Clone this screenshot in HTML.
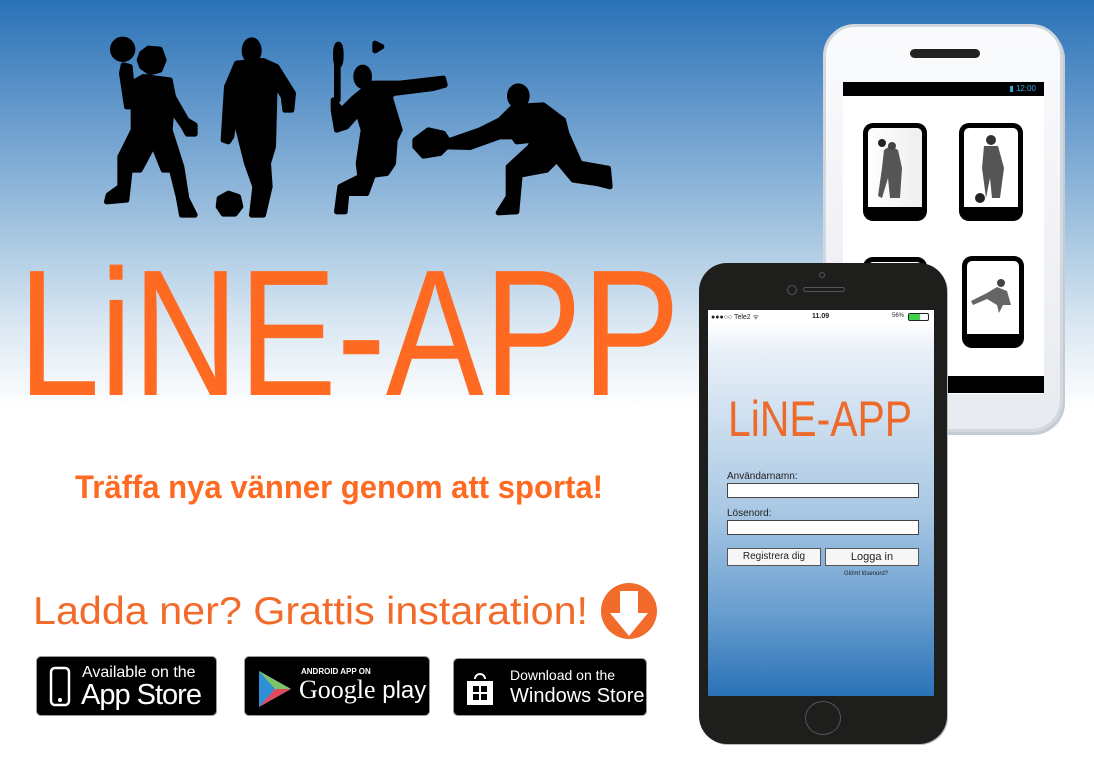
<!DOCTYPE html>
<html><head><meta charset="utf-8"><style>
*{margin:0;padding:0;box-sizing:border-box}
body{width:1094px;height:772px;overflow:hidden;position:relative;font-family:"Liberation Sans",sans-serif;background:linear-gradient(to bottom,#2a72b7 0px,#6fa0cf 130px,#a9c8e2 240px,#dde9f3 330px,#fff 410px,#fff 772px)}
.abs{position:absolute;white-space:nowrap}
.badge{position:absolute;background:#000;border-radius:5px;border:1px solid #999;color:#fff}
</style></head><body>

<svg class="abs" style="left:100px;top:30px" width="570" height="190" viewBox="0 0 1710 570">
<g fill="#000" stroke="#000" stroke-width="16" stroke-linejoin="round">
<circle cx="68" cy="58" r="30"/>
<polygon points="125,70 145,55 180,58 192,90 180,120 150,128 125,110 118,90"/>
<polygon points="70,105 90,110 95,160 130,140 210,150 220,200 260,270 285,285 285,312 262,312 250,290 215,240 210,300 245,410 260,505 285,555 245,555 235,500 215,420 190,420 160,345 120,420 90,420 80,510 20,515 25,495 60,470 60,380 100,300 100,230 80,230 65,130"/>
<ellipse cx="455" cy="62" rx="22" ry="32"/>
<polygon points="410,100 490,92 530,110 580,190 575,240 555,240 550,200 525,160 520,350 505,400 510,470 490,555 455,555 465,470 440,400 415,300 405,250 395,320 385,335 370,330 375,250 380,170"/>
<polygon points="358,505 385,490 415,500 422,530 405,552 370,552 355,530"/>
<ellipse cx="715" cy="75" rx="8" ry="32"/>
<rect x="710" y="100" width="4" height="110"/>
<polygon points="825,40 845,50 825,62"/>
<ellipse cx="788" cy="140" rx="20" ry="28"/>
<polygon points="700,210 725,240 760,205 815,160 900,160 1030,145 1035,165 1000,175 880,190 870,200 900,300 885,330 880,400 860,430 820,435 800,490 740,490 735,545 710,545 720,470 780,440 775,400 790,300 775,250 740,290 710,300 700,240"/>
<polygon points="945,330 985,300 1030,310 1050,340 1020,370 970,378 945,350"/>
<ellipse cx="1255" cy="198" rx="26" ry="30"/>
<polygon points="1040,335 1140,300 1200,270 1240,230 1330,225 1390,270 1400,310 1440,400 1525,415 1530,470 1490,460 1420,450 1370,390 1340,420 1260,435 1250,545 1195,548 1225,500 1225,410 1290,350 1300,330 1250,335 1240,320 1200,320 1110,352 1040,350"/>
</g></svg>

<svg class="abs" style="left:0;top:250px" width="700" height="160">
<text x="18" y="145" font-family="Liberation Sans" font-size="180" fill="#ff6a22" textLength="662" lengthAdjust="spacingAndGlyphs">LiNE-APP</text>
</svg>
<svg class="abs" style="left:0;top:460px" width="700" height="60">
<text x="75" y="38" font-family="Liberation Sans" font-weight="bold" font-size="32" fill="#ff6a22" textLength="528" lengthAdjust="spacingAndGlyphs">Träffa nya vänner genom att sporta!</text>
</svg>
<svg class="abs" style="left:0;top:580px" width="700" height="70">
<text x="33" y="44" font-family="Liberation Sans" font-size="39" fill="#f26b2a" textLength="555" lengthAdjust="spacingAndGlyphs">Ladda ner? Grattis instaration!</text>
<ellipse cx="629" cy="31" rx="28" ry="28" fill="#f26b2a"/>
<polygon points="620,11 638,11 638,33 648,33 629,56 610,33 620,33" fill="#fff"/>
</svg>

<div class="badge" style="left:36px;top:656px;width:181px;height:60px">
<svg class="abs" style="left:12px;top:9px" width="24" height="42"><rect x="2" y="2" width="18" height="37" rx="4" fill="none" stroke="#fff" stroke-width="2.5"/><circle cx="11" cy="34" r="2" fill="#fff"/></svg>
<div class="abs" style="left:45px;top:7px;font-size:16px">Available on the</div>
<div class="abs" style="left:44px;top:22px;font-size:29px;letter-spacing:-1px">App Store</div>
</div>
<div class="badge" style="left:244px;top:656px;width:186px;height:60px">
<svg class="abs" style="left:12px;top:12px" width="36" height="40"><polygon points="2,2 34,20 2,38" fill="#3bb0c9"/><polygon points="2,2 18,20 2,38" fill="#2e8fd6"/><polygon points="18,20 34,20 2,38" fill="#e04a5f"/><polygon points="2,2 34,20 18,20" fill="#7cc36a"/></svg>
<div class="abs" style="left:56px;top:10px;font-size:8px;font-weight:bold">ANDROID APP ON</div>
<div class="abs" style="left:54px;top:18px;font-size:26px;font-family:'Liberation Serif',serif">Google<span style="font-family:'Liberation Sans';font-size:24px"> play</span></div>
</div>
<div class="badge" style="left:453px;top:658px;width:194px;height:58px">
<svg class="abs" style="left:10px;top:10px" width="32" height="38"><path d="M11 10 a5 5 0 0 1 10 0" fill="none" stroke="#fff" stroke-width="2"/><rect x="3" y="12" width="26" height="24" fill="#fff"/><rect x="9" y="17" width="6" height="6" fill="#000"/><rect x="17" y="17" width="6" height="6" fill="#000"/><rect x="9" y="25" width="6" height="6" fill="#000"/><rect x="17" y="25" width="6" height="6" fill="#000"/></svg>
<div class="abs" style="left:56px;top:8px;font-size:14px">Download on the</div>
<div class="abs" style="left:56px;top:26px;font-size:20px">Windows Store</div>
</div>

<!-- back phone -->
<div class="abs" style="left:823px;top:24px;width:240px;height:408px;border-radius:32px;background:linear-gradient(#fafbfd,#e7eaef);border:3px solid #d3d8df;box-shadow:2px 3px 0 #c6ccd4">
<div class="abs" style="left:84px;top:22px;width:70px;height:9px;border-radius:5px;background:#222"></div>
<div class="abs" style="left:17px;top:55px;width:201px;height:312px;background:#fff"></div>
<div class="abs" style="left:17px;top:55px;width:201px;height:14px;background:#000;color:#39a9e0;font-size:8px;text-align:right;padding-right:8px;line-height:14px">▮ 12:00</div>
<div class="abs" style="left:17px;top:349px;width:201px;height:17px;background:#000"></div>
<div class="abs" style="left:37px;top:96px;width:64px;height:98px;border-radius:10px;border:5px solid #000;border-bottom-width:14px;background:linear-gradient(90deg,#fff,#eee)"><svg width="54" height="79"><polygon points="16,22 22,18 30,22 34,40 32,70 22,70 20,50 14,70 10,68 14,40" fill="#555"/><circle cx="14" cy="15" r="4" fill="#222"/><circle cx="24" cy="18" r="4" fill="#444"/></svg></div>
<div class="abs" style="left:133px;top:96px;width:64px;height:98px;border-radius:10px;border:5px solid #000;border-bottom-width:14px;background:#fff"><svg width="54" height="79"><polygon points="20,18 34,18 40,40 36,70 28,70 26,50 22,70 18,40" fill="#555"/><circle cx="27" cy="12" r="5" fill="#333"/><circle cx="16" cy="70" r="5" fill="#222"/></svg></div>
<div class="abs" style="left:37px;top:230px;width:64px;height:98px;border-radius:10px;border:5px solid #000;background:#fff"></div>
<div class="abs" style="left:136px;top:229px;width:62px;height:92px;border-radius:10px;border:5px solid #000;border-bottom-width:14px;background:#fff"><svg width="52" height="73"><polygon points="4,40 20,32 30,26 40,30 44,44 36,44 32,52 30,44 20,38 6,44" fill="#666"/><circle cx="34" cy="22" r="4" fill="#444"/></svg></div>
</div>

<!-- front phone -->
<div class="abs" style="left:699px;top:263px;width:248px;height:481px;border-radius:28px;background:#1e1e1c;box-shadow:1px 1px 0 #bbb">
<div class="abs" style="left:120px;top:9px;width:6px;height:6px;border-radius:50%;border:1px solid #555"></div>
<div class="abs" style="left:88px;top:22px;width:10px;height:10px;border-radius:50%;border:1px solid #555"></div>
<div class="abs" style="left:104px;top:24px;width:42px;height:5px;border-radius:3px;border:1px solid #555"></div>
<div class="abs" style="left:9px;top:47px;width:226px;height:386px;background:linear-gradient(#fff 0px,#fff 12px,#e9f0f8 40px,#a9c8e3 200px,#6a9fd0 300px,#2a72b7 386px)">
<div class="abs" style="left:3px;top:3px;font-size:7px;color:#222">●●●○○ Tele2 ᯤ</div>
<div class="abs" style="left:104px;top:3px;font-size:7px;font-weight:bold;color:#222">11.09</div>
<div class="abs" style="left:184px;top:3px;font-size:6px;color:#222">56%</div>
<div class="abs" style="left:200px;top:3px;width:21px;height:8px;border:1px solid #222;border-radius:2px"><div style="width:11px;height:6px;background:#3cd34a"></div></div>
<svg class="abs" style="left:0;top:84px" width="226" height="50"><text x="20" y="42" font-family="Liberation Sans" font-size="50" fill="#ee6a2a" textLength="184" lengthAdjust="spacingAndGlyphs">LiNE-APP</text></svg>
<div class="abs" style="left:19px;top:161px;font-size:10px;color:#222">Användarnamn:</div>
<div class="abs" style="left:19px;top:173px;width:192px;height:15px;background:#fff;border:1px solid #444"></div>
<div class="abs" style="left:19px;top:198px;font-size:10px;color:#222">Lösenord:</div>
<div class="abs" style="left:19px;top:210px;width:192px;height:15px;background:#fff;border:1px solid #444"></div>
<div class="abs" style="left:19px;top:238px;width:94px;height:18px;background:#f6f6f6;border:1px solid #555;font-size:10px;text-align:center;line-height:16px;color:#222">Registrera dig</div>
<div class="abs" style="left:117px;top:238px;width:94px;height:18px;background:#f6f6f6;border:1px solid #555;font-size:11px;text-align:center;line-height:16px;color:#222">Logga in</div>
<div class="abs" style="left:136px;top:261px;font-size:6px;color:#222">Glömt lösenord?</div>
</div>
<div class="abs" style="left:106px;top:438px;width:36px;height:34px;border-radius:50%;border:1px solid #555"></div>
</div>

</body></html>
